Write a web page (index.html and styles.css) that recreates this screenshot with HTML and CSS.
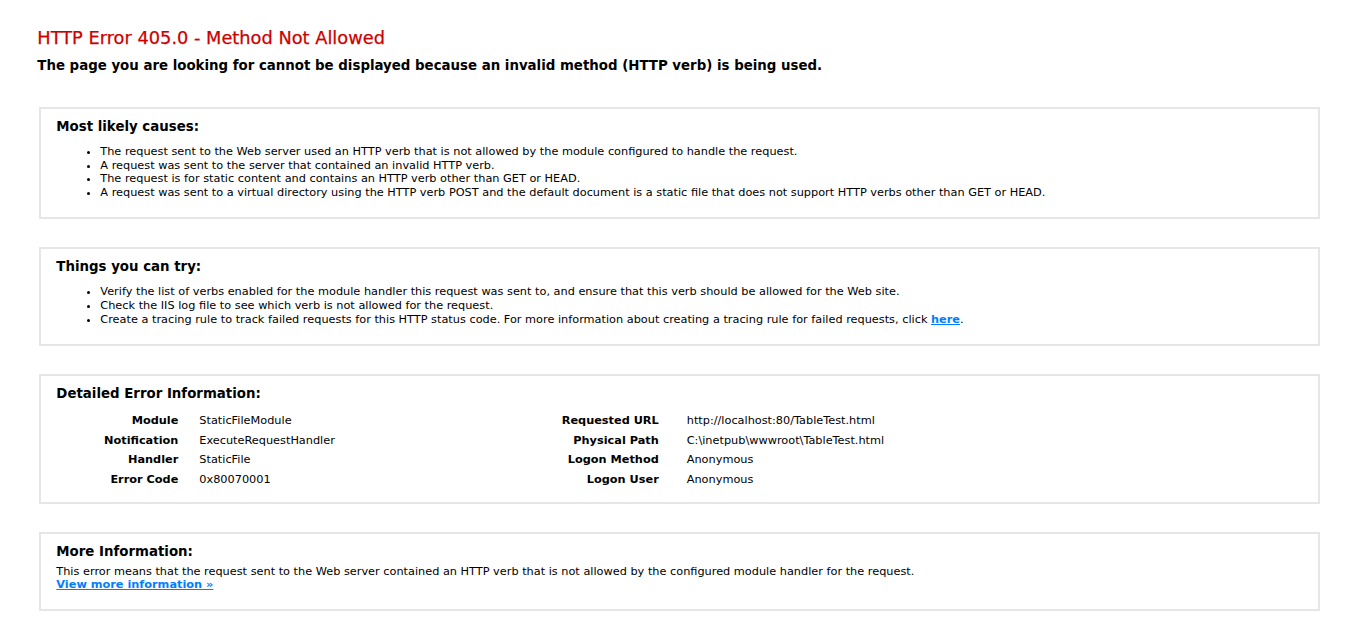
FILE: index.html
```html
<!DOCTYPE html>
<html>
<head>
<meta charset="utf-8">
<title>IIS 10.0 Detailed Error - 405.0 - Method Not Allowed</title>
<link rel="stylesheet" href="styles.css">
</head>
<body>
<div class="content">
  <div class="content-container">
    <h3>HTTP Error 405.0 - Method Not Allowed</h3>
    <h4>The page you are looking for cannot be displayed because an invalid method (HTTP verb) is being used.</h4>
  </div>
  <div class="content-container">
    <fieldset>
      <h4>Most likely causes:</h4>
      <ul>
        <li>The request sent to the Web server used an HTTP verb that is not allowed by the module configured to handle the request.</li>
        <li>A request was sent to the server that contained an invalid HTTP verb.</li>
        <li>The request is for static content and contains an HTTP verb other than GET or HEAD.</li>
        <li>A request was sent to a virtual directory using the HTTP verb POST and the default document is a static file that does not support HTTP verbs other than GET or HEAD.</li>
      </ul>
    </fieldset>
  </div>
  <div class="content-container">
    <fieldset>
      <h4>Things you can try:</h4>
      <ul>
        <li>Verify the list of verbs enabled for the module handler this request was sent to, and ensure that this verb should be allowed for the Web site.</li>
        <li>Check the IIS log file to see which verb is not allowed for the request.</li>
        <li>Create a tracing rule to track failed requests for this HTTP status code. For more information about creating a tracing rule for failed requests, click <a href="#">here</a>.</li>
      </ul>
    </fieldset>
  </div>
  <div class="content-container">
    <fieldset>
      <h4>Detailed Error Information:</h4>
      <div class="details">
        <div class="details-left">
          <table>
            <tr><th>Module</th><td>StaticFileModule</td></tr>
            <tr><th>Notification</th><td>ExecuteRequestHandler</td></tr>
            <tr><th>Handler</th><td>StaticFile</td></tr>
            <tr><th>Error Code</th><td>0x80070001</td></tr>
          </table>
        </div>
        <div class="details-right">
          <table>
            <tr><th>Requested URL</th><td>http://localhost:80/TableTest.html</td></tr>
            <tr><th>Physical Path</th><td>C:\inetpub\wwwroot\TableTest.html</td></tr>
            <tr><th>Logon Method</th><td>Anonymous</td></tr>
            <tr><th>Logon User</th><td>Anonymous</td></tr>
          </table>
        </div>
      </div>
    </fieldset>
  </div>
  <div class="content-container">
    <fieldset>
      <h4>More Information:</h4>
      This error means that the request sent to the Web server contained an HTTP verb that is not allowed by the configured module handler for the request.
      <p><a href="#">View more information &raquo;</a></p>
    </fieldset>
  </div>
</div>
</body>
</html>
```

FILE: styles.css
```css
html, body {
  background: #fff;
}
body {
  margin: 0;
  font-size: 11.3px;
  font-family: "DejaVu Sans", Verdana, sans-serif;
  color: #000;
}
.content {
  margin: 0 0 0 2%;
}
.content-container {
  width: 96%;
  margin-top: 8px;
  padding: 10px;
}
h3 {
  font-size: 17.8px;
  font-weight: normal;
  margin: 10px 0 0 0;
  color: #cc0000;
  line-height: 20px;
  -webkit-text-stroke: 0.25px #cc0000;
}
h4 {
  font-size: 13.35px;
  margin: 10px 0 5px 0;
  line-height: 16px;
}
fieldset {
  margin: 0 2px;
  padding: 0 15px 8px 15px;
  border: 2px solid #e6e6e6;
  min-width: 0;
}
ul {
  margin: 10px 0 10px 5px;
  padding-left: 39px;
}
li {
  line-height: 13.6px;
}
a {
  color: #007eff;
  font-weight: bold;
}
p {
  margin: 0 0 10px 0;
}
.details {
  display: flex;
}
.details-left {
  width: 35%;
  margin-right: 2%;
}
.details-right {
  width: 63%;
}
table {
  margin: 4px 0;
  width: 100%;
  border-collapse: collapse;
  border-spacing: 0;
}
th, td {
  vertical-align: top;
  padding: 3px 0;
  line-height: 13.6px;
}
th {
  text-align: right;
  white-space: nowrap;
  box-sizing: border-box;
}
td {
  text-align: left;
  font-weight: normal;
}
.details-left th {
  width: 143px;
  padding-right: 21px;
}
.details-right th {
  width: 169px;
  padding-right: 28px;
}
```
